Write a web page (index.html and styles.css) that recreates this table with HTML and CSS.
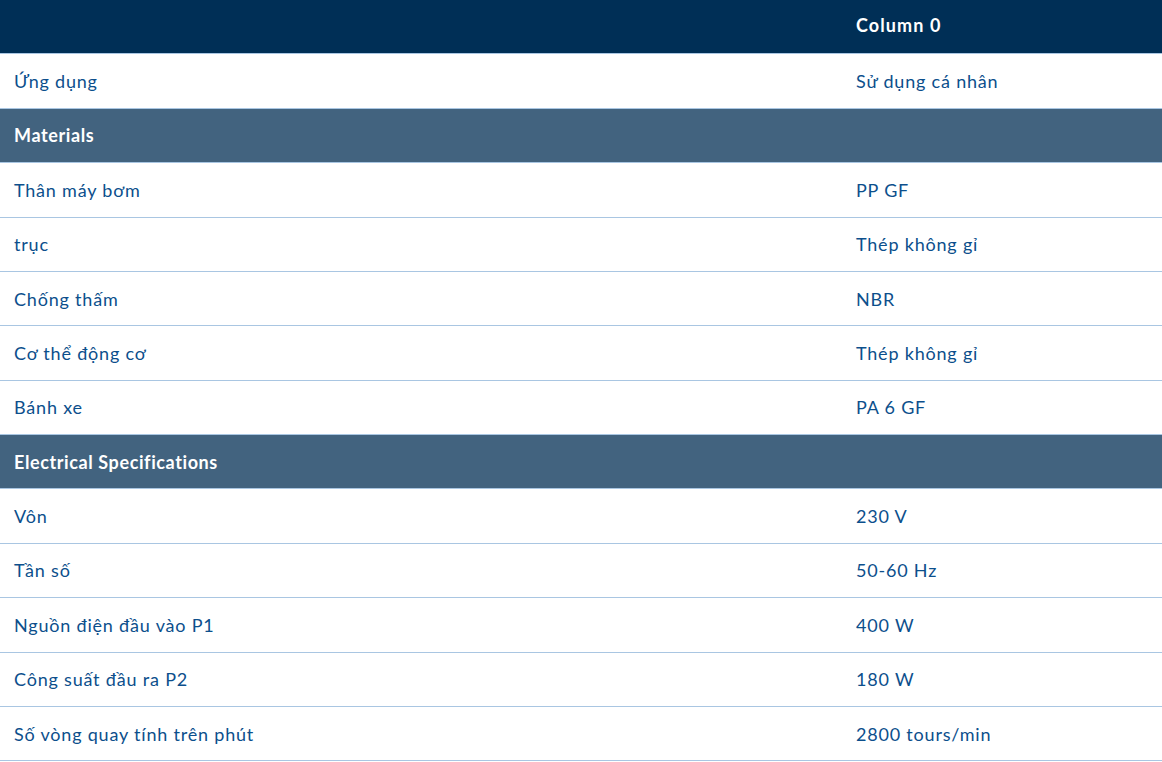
FILE: index.html
```html
<!DOCTYPE html>
<html lang="vi">
<head>
<meta charset="utf-8">
<link rel="stylesheet" href="styles.css">
</head>
<body>
<table class="spec">
  <colgroup><col class="c-label"><col class="c-value"></colgroup>
  <thead>
    <tr class="head"><th></th><th>Column 0</th></tr>
  </thead>
  <tbody>
    <tr><td>Ứng dụng</td><td>Sử dụng cá nhân</td></tr>
    <tr class="section"><td>Materials</td><td></td></tr>
    <tr><td>Thân máy bơm</td><td>PP GF</td></tr>
    <tr><td>trục</td><td>Thép không gỉ</td></tr>
    <tr><td>Chống thấm</td><td>NBR</td></tr>
    <tr><td>Cơ thể động cơ</td><td>Thép không gỉ</td></tr>
    <tr><td>Bánh xe</td><td>PA 6 GF</td></tr>
    <tr class="section"><td>Electrical Specifications</td><td></td></tr>
    <tr><td>Vôn</td><td>230 V</td></tr>
    <tr><td>Tần số</td><td>50-60 Hz</td></tr>
    <tr><td>Nguồn điện đầu vào P1</td><td>400 W</td></tr>
    <tr><td>Công suất đầu ra P2</td><td>180 W</td></tr>
    <tr><td>Số vòng quay tính trên phút</td><td>2800 tours/min</td></tr>
  </tbody>
</table>
</body>
</html>
```
FILE: styles.css
```css
html, body {
  margin: 0;
  padding: 0;
  background: #ffffff;
}
body {
  font-family: "Lato", "Open Sans", sans-serif;
  font-size: 18px;
  color: #0c4f8c;
}
.spec {
  width: 1162px;
  border-collapse: collapse;
  table-layout: fixed;
}
.c-label { width: 842px; }
.c-value { width: 320px; }
.spec th,
.spec td {
  text-align: left;
  padding: 14.69px 14px;
  line-height: 24px;
  height: 24px;
  border-bottom: 1px solid #a9c6e2;
  vertical-align: middle;
  letter-spacing: 0.8px;
}
.head th {
  background: #002f56;
  color: #ffffff;
  font-weight: 700;
  letter-spacing: 1.1px;
  padding-top: 12.69px;
  padding-bottom: 16.69px;
}
.section td {
  background: #42637f;
  color: #ffffff;
  font-weight: 700;
  letter-spacing: 0.6px;
}
```
